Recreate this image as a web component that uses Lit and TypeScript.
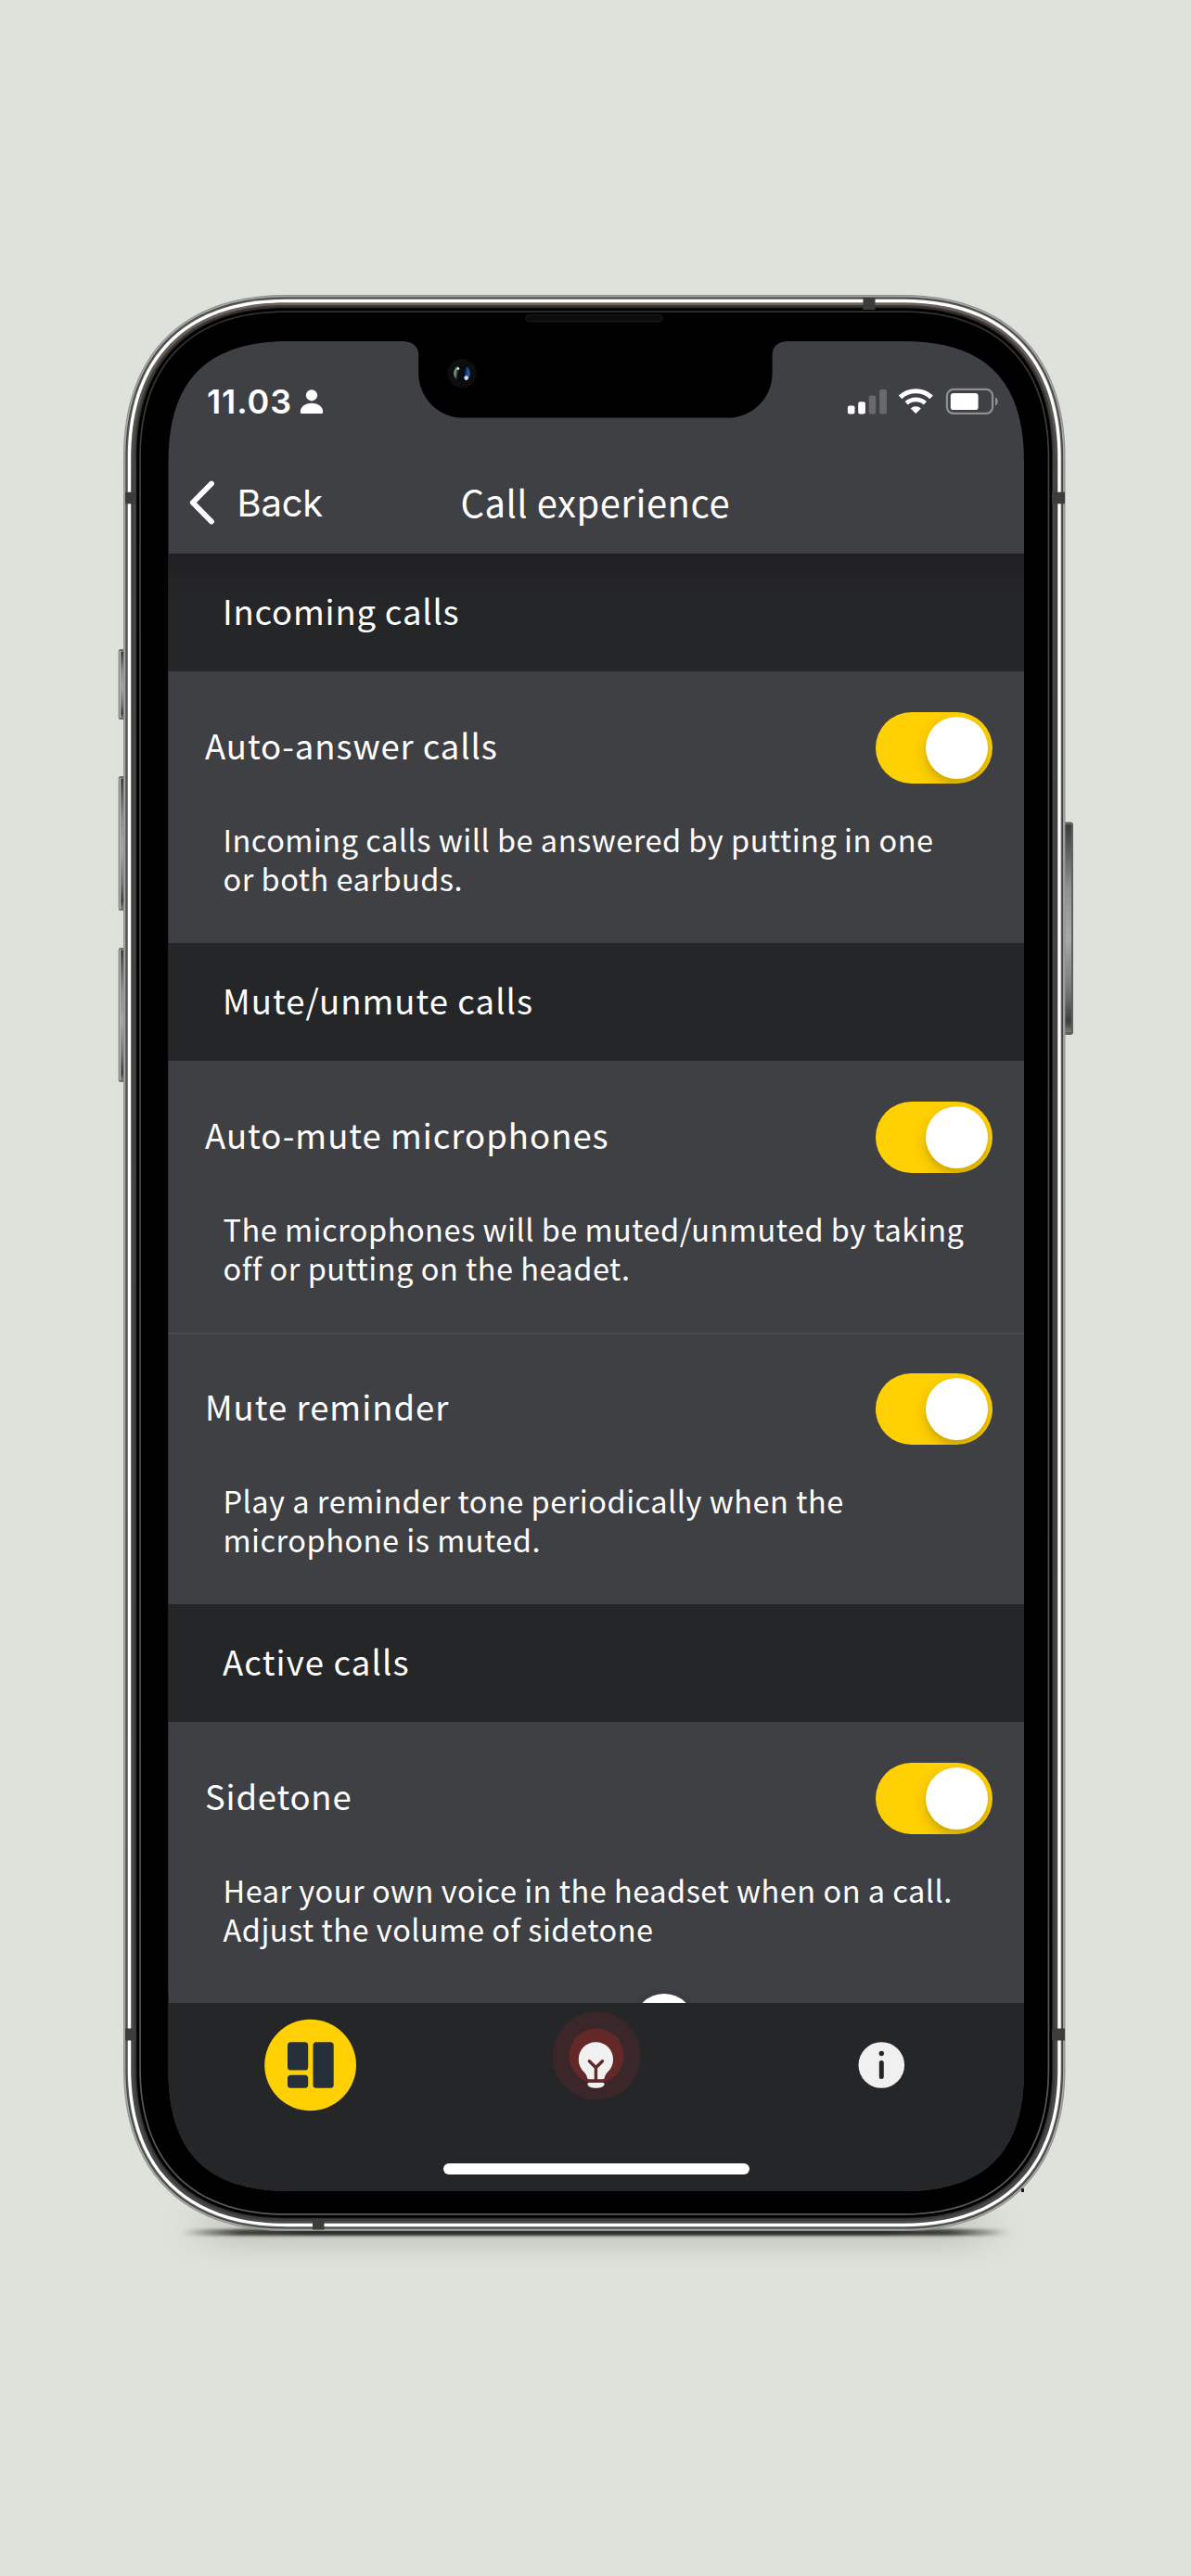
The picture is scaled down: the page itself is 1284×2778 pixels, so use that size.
import { LitElement, html, svg, css, nothing } from "lit";
import { customElement, property } from "lit/decorators.js";

/** Continuous-corner rectangle, inset from the outer edge of the handset. */
const PHONE_W = 1015.5;
const PHONE_H = 2088;
function shell(inset: number): string {
  const r = 175 - inset;
  const a = 64 - inset * 0.45;
  const x0 = inset;
  const y0 = inset;
  const x1 = PHONE_W - inset;
  const y1 = PHONE_H - inset;
  return [
    `M${x0},${y0 + r}`,
    `C${x0},${y0 + a} ${x0 + a},${y0} ${x0 + r},${y0}`,
    `L${x1 - r},${y0}`,
    `C${x1 - a},${y0} ${x1},${y0 + a} ${x1},${y0 + r}`,
    `L${x1},${y1 - r}`,
    `C${x1},${y1 - a} ${x1 - a},${y1} ${x1 - r},${y1}`,
    `L${x0 + r},${y1}`,
    `C${x0 + a},${y1} ${x0},${y1 - a} ${x0},${y1 - r}Z`,
  ].join(" ");
}

const layers: [number, string][] = [
  [0, "#8d908d"],
  [0.9, "#a4a7a4"],
  [2.4, "#3f3f3d"],
  [3.4, "#5f5f5d"],
  [4.8, "#ffffff"],
  [8.2, "url(#band)"],
  [11, "url(#band2)"],
  [13.5, "#1c1c1c"],
  [14.5, "#000000"],
  [17.2, "url(#rim)"],
  [18.9, "#000000"],
];

@customElement("phone-frame")
export class PhoneFrame extends LitElement {
  static styles = css`
    :host { display: block; }
    svg { display: block; overflow: visible; }
  `;
  render() {
    return html`<svg width="1016" height="2088" viewBox="0 0 1016 2088">
      <defs>
        <linearGradient id="band" x1="0" y1="0" x2="0" y2="1">
          <stop offset="0" stop-color="#6b645c" /><stop offset="0.06" stop-color="#5a554f" />
          <stop offset="0.1" stop-color="#3c3d3d" /><stop offset="1" stop-color="#4a4a4a" />
        </linearGradient>
        <linearGradient id="band2" x1="0" y1="0" x2="0" y2="1">
          <stop offset="0" stop-color="#3a3531" /><stop offset="0.06" stop-color="#3f3e3d" />
          <stop offset="0.1" stop-color="#484a4a" /><stop offset="1" stop-color="#3c3c3c" />
        </linearGradient>
        <linearGradient id="rim" x1="0" y1="0" x2="0" y2="1">
          <stop offset="0" stop-color="#303030" /><stop offset="0.1" stop-color="#444444" />
          <stop offset="1" stop-color="#5a5a5a" />
        </linearGradient>
        <linearGradient id="key" x1="0" y1="0" x2="0" y2="1">
          <stop offset="0" stop-color="#3c3c3a" /><stop offset="0.12" stop-color="#5c5c5a" />
          <stop offset="0.3" stop-color="#8f8f8f" /><stop offset="0.55" stop-color="#a9a9a9" />
          <stop offset="0.8" stop-color="#767676" /><stop offset="0.95" stop-color="#3e3e3c" />
          <stop offset="1" stop-color="#777" />
        </linearGradient>
        <linearGradient id="contact" x1="0" y1="0" x2="1" y2="0">
          <stop offset="0" stop-color="#2b2e2a" stop-opacity="0" /><stop offset="0.07" stop-color="#2b2e2a" stop-opacity="0.85" />
          <stop offset="0.15" stop-color="#2b2e2a" /><stop offset="0.85" stop-color="#2b2e2a" />
          <stop offset="0.93" stop-color="#2b2e2a" stop-opacity="0.85" /><stop offset="1" stop-color="#2b2e2a" stop-opacity="0" />
        </linearGradient>
        <filter id="tight" x="-5%" y="-200%" width="110%" height="500%"><feGaussianBlur stdDeviation="3 1.600" /></filter>
        <filter id="soft" x="-20%" y="-200%" width="140%" height="500%"><feGaussianBlur stdDeviation="26 13" /></filter>
      </defs>
      <rect x="90" y="2066" width="836" height="40" fill="#8c9086" opacity="0.32" filter="url(#soft)" />
      <rect x="64" y="2086" width="890" height="7" rx="3" fill="url(#contact)" filter="url(#tight)" />
      ${[[382, 76], [519, 145], [704, 145]].map(
        ([y, h]) => svg`
          <rect x="-5.3" y=${y} width="8" height=${h} rx="2.5" fill="#6f716f" />
          <rect x="-4.3" y=${y + 2} width="1.6" height=${h - 4} fill="#b9bbb7" />
          <rect x="-2.6" y=${y + 3} width="5" height=${h - 6} fill="url(#key)" />`
      )}
      <rect x="1012" y="568.500" width="12" height="229.500" rx="3" fill="#5f6060" />
      <rect x="1014" y="571.500" width="8" height="223.500" fill="url(#key)" />
      ${layers.map(([inset, fill]) => svg`<path d=${shell(inset)} fill=${fill} />`)}
      <g fill="#3c3c3b">
        <rect x="797.5" y="3" width="13" height="13" />
        <rect x="2" y="212.7" width="11.5" height="12.6" />
        <rect x="1001" y="212.7" width="14" height="12.6" />
        <rect x="204" y="2074.5" width="12.5" height="12" />
        <rect x="2" y="1869.5" width="11.5" height="13" />
        <rect x="1001" y="1869.5" width="14" height="13" />
      </g>
      <rect x="968" y="2042" width="3" height="4" fill="#1a1a1a" />
    </svg>`;
  }
}

@customElement("status-bar")
export class StatusBar extends LitElement {
  static styles = css`
    :host { display: flex; justify-content: space-between; height: 120px; box-sizing: border-box; padding: 46px 31px 0 41.5px; }
    .side { display: flex; height: 38px; align-items: center; }
    .time { font: 600 36px/38px "Inter", sans-serif; letter-spacing: 0.9px; color: #fff; }
    svg { display: block; }
    .person { margin-left: -1.500px; }
  `;
  render() {
    return html`
      <div class="side">
        <span class="time">11.03</span>
        <svg class="person" width="40" height="38" viewBox="0 0 40 38" fill="#fff">
          <circle cx="22" cy="12.3" r="6.1" />
          <path d="M9.800 30.2C9.800 25 14.500 20.700 22 20.700S34.200 25 34.200 30.200C34.200 31.500 33.400 32 32.200 32H11.800C10.600 32 9.800 31.500 9.800 30.200Z" />
        </svg>
      </div>
      <div class="side">
        <svg width="164" height="38" viewBox="0 0 164 38" overflow="visible">
          <g fill="#fff" transform="translate(0.500 0.500)">
            <rect x="4.400" y="23" width="7.600" height="9" rx="2" />
            <rect x="15.700" y="18.700" width="7.700" height="13.300" rx="2" />
            <g opacity="0.22">
              <rect x="27.300" y="12" width="7.400" height="20" rx="2" />
              <rect x="38.700" y="5.500" width="7.700" height="26.500" rx="2" />
            </g>
          </g>
          <g fill="none" stroke="#fff" stroke-width="5.200">
            <path d="M61.500 14.400A24.500 24.500 0 0 1 95.100 14.400" />
            <path d="M68.200 20.700A15 15 0 0 1 88.400 20.700" stroke-width="4.800" />
          </g>
          <path d="M78.300 32L72.700 26.400A8.200 8.200 0 0 1 83.900 26.400Z" fill="#fff" />
          <g transform="translate(1 0.300)">
            <rect x="110.900" y="5.600" width="49.200" height="26" rx="7" fill="none" stroke="#8e8f91" stroke-width="2.200" />
            <rect x="114.800" y="9.600" width="29.800" height="18.200" rx="3.200" fill="#fff" />
            <path d="M163 14.300C166.700 15.500 166.700 21.900 163 23.100Z" fill="#8e8f91" />
          </g>
        </svg>
      </div>`;
  }
}

@customElement("toggle-switch")
export class ToggleSwitch extends LitElement {
  static styles = css`
    :host { display: flex; justify-content: flex-end; box-sizing: border-box; width: 126px; height: 77px; padding: 5px;
      border-radius: 39px; background: #ffd002; overflow: hidden; }
    .knob { width: 67px; height: 67px; border-radius: 50%; background: #fff;
      box-shadow: 0 6px 16px rgba(0, 0, 0, 0.16), 0 6px 4px rgba(0, 0, 0, 0.06); }
  `;
  render() {
    return html`<div class="knob"></div>`;
  }
}

interface Setting {
  label: string;
  tracking: number;
  lines: string[];
  slider?: boolean;
}

@customElement("setting-row")
export class SettingRow extends LitElement {
  @property({ attribute: false }) setting!: Setting;
  static styles = css`
    :host { display: flex; flex-direction: column; box-sizing: border-box; height: 293px; padding: 44px 34px 0 39.500px; background: #3f4044; }
    .top { display: flex; justify-content: space-between; align-items: center; height: 77px; }
    .label { font-size: 36.500px; line-height: 50px; padding-bottom: 4px; }
    .text { margin: 39.500px 0 0 19.500px; font-size: 32.500px; line-height: 42px; letter-spacing: 0.5px; white-space: nowrap; }
    .slider { display: flex; padding: 49px 0 0 462px; }
    .thumb { flex: none; width: 66px; height: 66px; border-radius: 50%; background: #fff; box-shadow: 0 2px 14px rgba(0, 0, 0, 0.2); }
  `;
  render() {
    const s = this.setting;
    return html`
      <div class="top">
        <span class="label" style="letter-spacing:${s.tracking}px">${s.label}</span>
        <toggle-switch></toggle-switch>
      </div>
      <div class="text">${s.lines.map((l) => html`<div>${l}</div>`)}</div>
      ${s.slider ? html`<div class="slider"><div class="thumb"></div></div>` : nothing}`;
  }
}

@customElement("tab-bar")
export class TabBar extends LitElement {
  static styles = css`
    :host { display: flex; flex-direction: column; align-items: center; box-sizing: border-box; height: 203px; background: #252628; }
    .tabs { display: flex; justify-content: center; gap: 208.500px; width: 100%; height: 173px; padding-top: 9px; box-sizing: border-box; }
    svg { display: block; flex: none; }
    .home { width: 330px; height: 12px; border-radius: 6px; background: #fff; }
  `;
  render() {
    return html`
      <div class="tabs">
        <svg width="100" height="116" viewBox="0 0 100 116">
          <g transform="translate(0.600 0)">
            <ellipse cx="50" cy="58" rx="49.400" ry="49.200" fill="#ffd002" />
            <g fill="#25303a">
              <rect x="25.400" y="33.300" width="22.200" height="30.200" rx="3.600" />
              <rect x="25.400" y="68.800" width="22.200" height="14" rx="3.600" />
              <rect x="52.900" y="33.300" width="22.200" height="49.500" rx="3.600" />
            </g>
          </g>
        </svg>
        <svg width="100" height="116" viewBox="0 0 100 116">
          <circle cx="50" cy="48" r="47.400" fill="#3b2729" />
          <circle cx="50" cy="48" r="29.600" fill="#642829" />
          <path d="M49.400 33.300C59.800 33.300 68 41.300 68 51.700C68 58.600 64.800 62.700 61.700 66C59.900 68 59.200 69.400 58.900 71.500Q58.600 73.200 57 73.200H41.800Q40.200 73.200 39.900 71.500C39.600 69.400 38.900 68 37.100 66C34 62.700 30.800 58.600 30.800 51.700C30.800 41.300 39 33.300 49.400 33.300Z" fill="#f0f0f0" />
          <path d="M42.300 53.700L49.400 60.800L56.500 53.700M49.400 60.800V73" fill="none" stroke="#642829" stroke-width="3.400" stroke-linecap="round" stroke-linejoin="round" />
          <path d="M42 77H57Q58.800 77 58.600 78.700C58 81.500 54.500 82.800 49.500 82.800S41 81.500 40.400 78.700Q40.200 77 42 77Z" fill="#f0f0f0" />
        </svg>
        <svg width="100" height="116" viewBox="0 0 100 116">
          <circle cx="49.300" cy="58" r="24.800" fill="#f0f0f0" />
          <circle cx="49.300" cy="45.500" r="2.700" fill="#252628" />
          <rect x="46.800" y="53" width="5" height="20" rx="2.500" fill="#252628" />
        </svg>
      </div>
      <div class="home"></div>`;
  }
}

const sections: { title: string; tracking: number; rows: Setting[] }[] = [
  {
    title: "Incoming calls",
    tracking: 0.8,
    rows: [
      {
        label: "Auto-answer calls",
        tracking: 0.9,
        lines: ["Incoming calls will be answered by putting in one", "or both earbuds."],
      },
    ],
  },
  {
    title: "Mute/unmute calls",
    tracking: 1.05,
    rows: [
      {
        label: "Auto-mute microphones",
        tracking: 1,
        lines: ["The microphones will be muted/unmuted by taking", "off or putting on the headet."],
      },
      {
        label: "Mute reminder",
        tracking: 1,
        lines: ["Play a reminder tone periodically when the", "microphone is muted."],
      },
    ],
  },
  {
    title: "Active calls",
    tracking: 1.15,
    rows: [
      {
        label: "Sidetone",
        tracking: 0.8,
        lines: ["Hear your own voice in the headset when on a call.", "Adjust the volume of sidetone"],
        slider: true,
      },
    ],
  },
];

@customElement("app-root")
export class AppRoot extends LitElement {
  static styles = css`
    :host { display: block; width: 1284px; height: 2778px; box-sizing: border-box; overflow: hidden; background: #dfe2da;
      padding: 317.700px 0 0 133.300px; color: #fff; font-family: "Noto Sans CJK SC", "Noto Sans", sans-serif; }
    .phone { position: relative; width: 1015.500px; height: 2088px; box-sizing: border-box; padding: 50.300px 0 0 48.200px; }
    phone-frame { position: absolute; left: 0; top: 0; }
    .screen { position: relative; display: flex; flex-direction: column; width: 922.500px; height: 1995px; background: #3f4044;
      clip-path: path("M0,130 C0,42 42,0 130,0 L792.5,0 C880.5,0 922.5,42 922.5,130 L922.5,1865 C922.5,1953 880.5,1995 792.5,1995 L130,1995 C42,1995 0,1953 0,1865 Z"); }
    .nav { display: grid; grid-template-columns: 1fr auto 1fr; align-items: center; height: 109px; padding-left: 22px; box-sizing: border-box; }
    .back { display: flex; align-items: center; font: 400 40px/48px "Inter", sans-serif; letter-spacing: -0.2px; }
    .back svg { display: block; margin-right: 19px; }
    .back span { padding-top: 2px; }
    .title { font-size: 40px; line-height: 56px; letter-spacing: 0.5px; padding: 0 24px 2px 0; }
    .list { display: flex; flex-direction: column; flex: 1; min-height: 0; overflow: hidden; }
    .heading { display: flex; align-items: center; box-sizing: border-box; flex: none; height: 127px; padding: 0 0 4px 58.500px;
      background: #252628; font-size: 36.500px; }
    .list .heading:first-child { background: linear-gradient(#202022, #252628 46px); }
    setting-row { flex: none; }
    setting-row + setting-row { border-top: 2px solid #4a4b50; padding-top: 42px; }
    .notch { position: absolute; left: 300px; top: 0; }
    tab-bar { flex: none; }
  `;
  render() {
    return html`
      <div class="phone">
        <phone-frame></phone-frame>
        <div class="screen">
          <status-bar></status-bar>
          <div class="nav">
            <div class="back">
              <svg width="33" height="56" viewBox="0 0 33 56" fill="none" stroke="#fff" stroke-width="5.800" stroke-linecap="round" stroke-linejoin="round">
                <path d="M25 7.500L4.800 28L25 48.500" />
              </svg>
              <span>Back</span>
            </div>
            <div class="title">Call experience</div>
            <div></div>
          </div>
          <div class="list">
            ${sections.map(
              (s) => html`
                <div class="heading"><span style="letter-spacing:${s.tracking}px">${s.title}</span></div>
                ${s.rows.map((r) => html`<setting-row .setting=${r}></setting-row>`)}`
            )}
          </div>
          <tab-bar></tab-bar>
        </div>
        <svg class="notch" width="420" height="140" viewBox="0 0 420 140">
          <defs>
            <linearGradient id="lens" x1="0" y1="0" x2="1" y2="0.150">
              <stop offset="0.020" stop-color="#7fae98" /><stop offset="0.200" stop-color="#5d8775" />
              <stop offset="0.330" stop-color="#0a0c0d" /><stop offset="0.700" stop-color="#0a0c10" />
              <stop offset="0.850" stop-color="#174f94" /><stop offset="1" stop-color="#1b5aa8" />
            </linearGradient>
          </defs>
          <path d="M4 50.500V42H414V50.500A13.800 13.800 0 0 0 399.600 64.300V84.500A48 48 0 0 1 351.600 132.600H66A48 48 0 0 1 18.200 84.500V64.300A13.800 13.800 0 0 0 4 50.500Z" fill="#000" />
          <rect x="134" y="21.500" width="147.500" height="7.500" rx="3.750" fill="#0d0d0d" stroke="#222" stroke-width="0.700" />
          <circle cx="65" cy="84.600" r="15.600" fill="#0d0d0d" />
          <circle cx="65" cy="84.600" r="8.900" fill="url(#lens)" />
          <path d="M62 76.200A8.900 8.900 0 0 1 70 77.200L66 82Z" fill="#0a0c0d" />
          <path d="M61 92.500A8.900 8.900 0 0 0 69 92.500L65 86Z" fill="#0a0c0d" />
          <circle cx="60.800" cy="79.500" r="1.500" fill="#c7d4cf" />
          <circle cx="69.700" cy="89.600" r="2.300" fill="#dcdcf4" />
        </svg>
      </div>`;
  }
}
